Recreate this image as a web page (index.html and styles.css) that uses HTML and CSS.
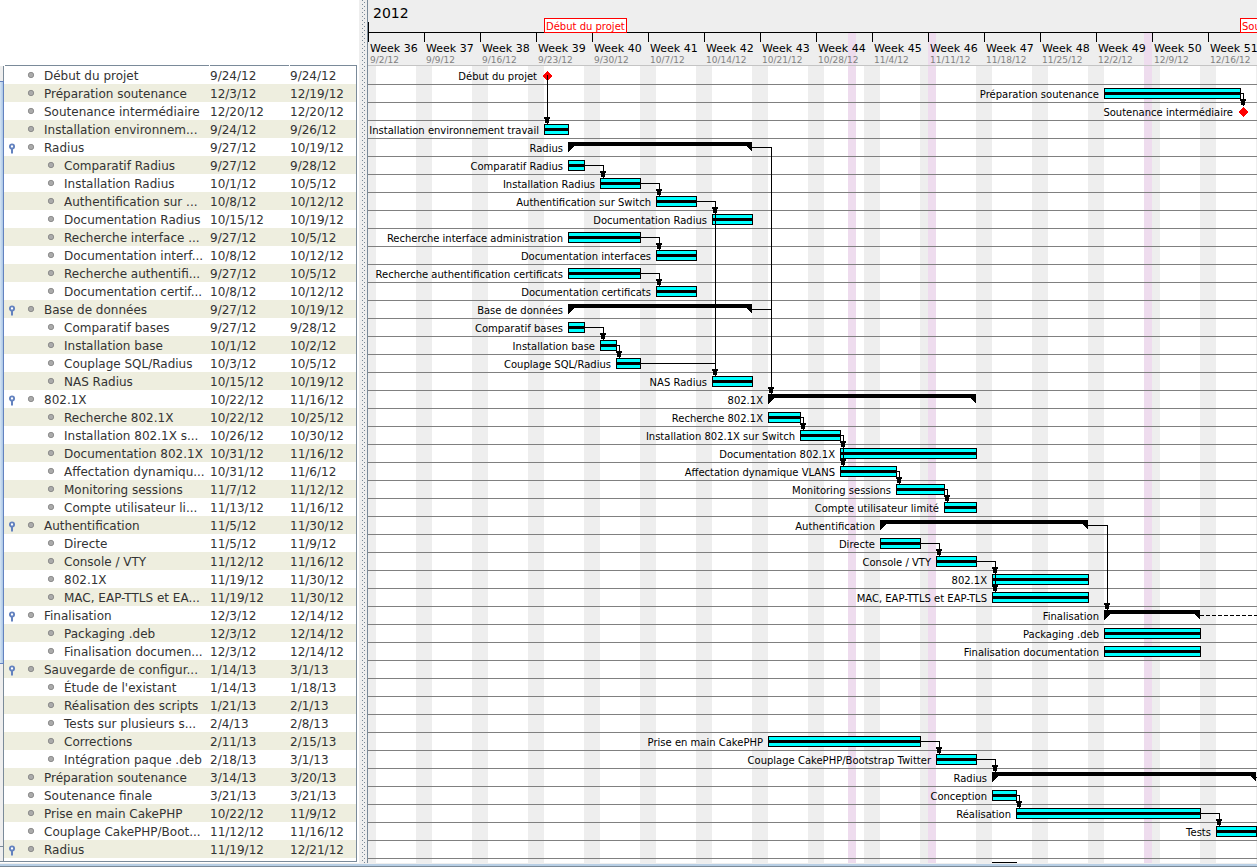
FILE: index.html
```html
<!DOCTYPE html>
<html lang="fr">
<head>
<meta charset="utf-8">
<title>Diagramme de Gantt</title>
<link rel="stylesheet" href="styles.css">
</head>
<body>
<main class="app">
  <div class="workspace">
    <div class="scroll-strip" aria-hidden="true">
      <span class="strip-top"></span>
      <span class="strip-thumb"></span>
      <span class="strip-track"></span>
      <span class="strip-button"></span>
    </div>
    <section class="tasks" aria-label="Tâches">
      <div class="tasks-head"><span></span><span></span><span></span></div>
      <table class="task-table">
        <colgroup><col class="col-name"><col class="col-start"><col class="col-end"></colgroup>
        <tbody id="task-rows"></tbody>
      </table>
    </section>
    <div class="splitter" role="separator" aria-orientation="vertical"></div>
    <section class="gantt" aria-label="Planning">
      <header class="timeline">
        <div class="holidays" aria-hidden="true"><span></span><span></span><span></span></div>
        <div class="year-row">2012
          <span class="flag flag-start">Début du projet</span>
          <span class="flag flag-mid">Soutenance intermédiaire</span>
        </div>
        <ol class="weeks" id="weeks"></ol>
      </header>
      <div class="chart">
        <div class="holidays" aria-hidden="true"><span></span><span></span><span></span></div>
        <svg id="chart" class="chart-canvas" width="1200" height="810" role="img" aria-label="Diagramme de Gantt"></svg>
      </div>
    </section>
  </div>
  <footer class="bottom-edge"></footer>
</main>
<script src="gantt.js"></script>
</body>
</html>
```

FILE: styles.css
```css
* { box-sizing: border-box; }

body {
  margin: 0;
  background: #fff;
  color: #333;
  font-family: "DejaVu Sans", Verdana, sans-serif;
  font-size: 12px;
}

.app {
  display: flex;
  flex-direction: column;
  height: 100vh;
  overflow: hidden;
}

.workspace {
  flex: 1;
  min-height: 0;
  display: grid;
  grid-template-columns: 4px 353px 11px minmax(0, 1fr);
}

/* Left scroll strip */
.scroll-strip {
  display: flex;
  flex-direction: column;
  padding: 66px 0 1px;
}
.scroll-strip span { border-right: 1px solid #7a8a99; background: #eee; }
.scroll-strip .strip-top { height: 15px; }
.scroll-strip .strip-thumb {
  flex: 582;
  background: linear-gradient(90deg, #d6e4f3, #a9c6e6);
  border: solid #6382bf;
  border-width: 1px 1px 1px 0;
}
.scroll-strip .strip-track { flex: 182; }
.scroll-strip .strip-button { height: 16px; border-top: 1px solid #7a8a99; border-bottom: 1px solid #7a8a99; }

/* Task list */
.tasks {
  display: flex;
  flex-direction: column;
  min-height: 0;
  padding-bottom: 1px;
}
.tasks-head {
  display: grid;
  grid-template-columns: 204px 79px 1fr;
  gap: 1px;
  height: 66px;
  padding-left: 1px;
}
.tasks-head span { border-bottom: 1px solid #7a8a99; }
.task-table {
  width: 100%;
  flex: 1;
  border-collapse: collapse;
  table-layout: fixed;
  display: block;
  overflow: hidden;
  border-right: 1px solid #7a8a99;
  border-bottom: 1px solid #7a8a99;
}
.col-name { width: 204px; }
.col-start { width: 80px; }
.col-end { width: 68px; }
.task-row:nth-child(even) { background: #eeeedf; }
.task-row td {
  height: 18px;
  padding: 2px 0 0 2px;
  line-height: 16px;
  white-space: nowrap;
}
.task-row .name-cell { padding: 0; }
.name {
  display: grid;
  grid-template-columns: 16px 22px 1fr;
  align-items: center;
  column-gap: 1px;
}
.name.child { grid-template-columns: 36px 22px 1fr; }
.name-text { padding-top: 2px; }
.toggle {
  width: 16px;
  height: 18px;
  padding: 0;
  border: 0;
  background: none;
  display: block;
}
.toggle svg, .bullet { display: block; }
.bullet { margin-left: 6px; }

/* Splitter */
.splitter {
  border-right: 1px solid #7a8a99;
  background:
    linear-gradient(90deg, #fff 2px, transparent 2px),
    conic-gradient(from 0deg at 1px 1px, transparent 75%, #7a8a99 0) 5px 0 / 6px 4px,
    conic-gradient(from 0deg at 1px 1px, transparent 75%, #7a8a99 0) 7px 2px / 6px 4px,
    #eee;
}

/* Timeline header */
.gantt {
  display: flex;
  flex-direction: column;
  min-width: 0;
  min-height: 0;
  overflow: hidden;
  color: #000;
}
.timeline {
  position: relative;
  height: 66px;
  background: #eee;
  border-bottom: 1px solid #c4c4c4;
}
.timeline .holidays { top: 33px; }
.year-row {
  position: relative;
  height: 33px;
  padding: 5px;
  border-bottom: 1px solid #000;
  background: linear-gradient(#000, #000) 0 100% / 1px 10px no-repeat;
  font-size: 14px;
  line-height: 16px;
}
.flag {
  position: absolute;
  top: 18px;
  height: 15px;
  padding: 0 1px;
  border: 1px solid #f00;
  background: #fff;
  color: #f00;
  font-size: 10px;
  line-height: 15px;
  white-space: nowrap;
}
.flag-start { left: 176px; }
.flag-mid { left: 872px; }
.weeks {
  position: relative;
  display: flex;
  margin: 0;
  padding: 0;
  list-style: none;
}
.week {
  flex: 0 0 56px;
  height: 32px;
  padding: 8px 0 0 2px;
  white-space: nowrap;
  font-size: 11px;
  line-height: 15px;
  background: linear-gradient(#000, #000) 0 0 / 1px 9px no-repeat;
}
.week time {
  display: block;
  color: #808080;
  font-size: 9px;
  line-height: 9px;
}

/* Chart: 8px per day, 18px per row, weeks start on Sunday */
.chart {
  position: relative;
  flex: 1;
  min-height: 0;
  overflow: hidden;
  background: repeating-linear-gradient(90deg, #eee 0 8px, #fff 8px 48px, #eee 48px 56px);
}
.holidays { position: absolute; inset: 0; overflow: hidden; }
.holidays span { position: absolute; top: 0; bottom: 0; width: 8px; background: #eedcee; }
.holidays span:nth-child(1) { left: 480px; }
.holidays span:nth-child(2) { left: 560px; }
.holidays span:nth-child(3) { left: 776px; }
.chart-canvas { position: relative; display: block; shape-rendering: crispEdges; }
.row-line { stroke: #808080; }
.bar { fill: #0ff; stroke: #000; }
.progress, .summary, .arrow { fill: #000; }
.milestone { fill: #f00; }
.link { fill: none; stroke: #000; }
.link.dashed { stroke-dasharray: 4 2; }
.bar-label { font-size: 10px; text-anchor: end; fill: #000; }

.bottom-edge {
  height: 4px;
  border-top: 1px solid #eee;
  border-bottom: 1px solid #7a8a99;
  background: #b8cfe5;
}
```

FILE: gantt.js
```javascript
const DAY = 8;
const ROW = 18;

// [level, name, start, end, is group]
const tasks = [
  [1, "Début du projet", "9/24/12", "9/24/12"],
  [1, "Préparation soutenance", "12/3/12", "12/19/12"],
  [1, "Soutenance intermédiaire", "12/20/12", "12/20/12"],
  [1, "Installation environnem...", "9/24/12", "9/26/12"],
  [1, "Radius", "9/27/12", "10/19/12", true],
  [2, "Comparatif Radius", "9/27/12", "9/28/12"],
  [2, "Installation Radius", "10/1/12", "10/5/12"],
  [2, "Authentification sur ...", "10/8/12", "10/12/12"],
  [2, "Documentation Radius", "10/15/12", "10/19/12"],
  [2, "Recherche interface ...", "9/27/12", "10/5/12"],
  [2, "Documentation interf...", "10/8/12", "10/12/12"],
  [2, "Recherche authentifi...", "9/27/12", "10/5/12"],
  [2, "Documentation certif...", "10/8/12", "10/12/12"],
  [1, "Base de données", "9/27/12", "10/19/12", true],
  [2, "Comparatif bases", "9/27/12", "9/28/12"],
  [2, "Installation base", "10/1/12", "10/2/12"],
  [2, "Couplage SQL/Radius", "10/3/12", "10/5/12"],
  [2, "NAS Radius", "10/15/12", "10/19/12"],
  [1, "802.1X", "10/22/12", "11/16/12", true],
  [2, "Recherche 802.1X", "10/22/12", "10/25/12"],
  [2, "Installation 802.1X s...", "10/26/12", "10/30/12"],
  [2, "Documentation 802.1X", "10/31/12", "11/16/12"],
  [2, "Affectation dynamiqu...", "10/31/12", "11/6/12"],
  [2, "Monitoring sessions", "11/7/12", "11/12/12"],
  [2, "Compte utilisateur li...", "11/13/12", "11/16/12"],
  [1, "Authentification", "11/5/12", "11/30/12", true],
  [2, "Directe", "11/5/12", "11/9/12"],
  [2, "Console / VTY", "11/12/12", "11/16/12"],
  [2, "802.1X", "11/19/12", "11/30/12"],
  [2, "MAC, EAP-TTLS et EA...", "11/19/12", "11/30/12"],
  [1, "Finalisation", "12/3/12", "12/14/12", true],
  [2, "Packaging .deb", "12/3/12", "12/14/12"],
  [2, "Finalisation documen...", "12/3/12", "12/14/12"],
  [1, "Sauvegarde de configur...", "1/14/13", "3/1/13", true],
  [2, "Étude de l'existant", "1/14/13", "1/18/13"],
  [2, "Réalisation des scripts", "1/21/13", "2/1/13"],
  [2, "Tests sur plusieurs s...", "2/4/13", "2/8/13"],
  [2, "Corrections", "2/11/13", "2/15/13"],
  [2, "Intégration paque .deb", "2/18/13", "3/1/13"],
  [1, "Préparation soutenance", "3/14/13", "3/20/13"],
  [1, "Soutenance finale", "3/21/13", "3/21/13"],
  [1, "Prise en main CakePHP", "10/22/12", "11/9/12"],
  [1, "Couplage CakePHP/Boot...", "11/12/12", "11/16/12"],
  [1, "Radius", "11/19/12", "12/21/12", true]
];

// row: [label, start, end, type]
const bars = {
  0: ["Début du projet", "9/24/12", "9/24/12", "milestone"],
  1: ["Préparation soutenance", "12/3/12", "12/19/12"],
  2: ["Soutenance intermédiaire", "12/20/12", "12/20/12", "milestone"],
  3: ["Installation environnement travail", "9/24/12", "9/26/12"],
  4: ["Radius", "9/27/12", "10/19/12", "summary"],
  5: ["Comparatif Radius", "9/27/12", "9/28/12"],
  6: ["Installation Radius", "10/1/12", "10/5/12"],
  7: ["Authentification sur Switch", "10/8/12", "10/12/12"],
  8: ["Documentation Radius", "10/15/12", "10/19/12"],
  9: ["Recherche interface administration", "9/27/12", "10/5/12"],
  10: ["Documentation interfaces", "10/8/12", "10/12/12"],
  11: ["Recherche authentification certificats", "9/27/12", "10/5/12"],
  12: ["Documentation certificats", "10/8/12", "10/12/12"],
  13: ["Base de données", "9/27/12", "10/19/12", "summary"],
  14: ["Comparatif bases", "9/27/12", "9/28/12"],
  15: ["Installation base", "10/1/12", "10/2/12"],
  16: ["Couplage SQL/Radius", "10/3/12", "10/5/12"],
  17: ["NAS Radius", "10/15/12", "10/19/12"],
  18: ["802.1X", "10/22/12", "11/16/12", "summary"],
  19: ["Recherche 802.1X", "10/22/12", "10/25/12"],
  20: ["Installation 802.1X sur Switch", "10/26/12", "10/30/12"],
  21: ["Documentation 802.1X", "10/31/12", "11/16/12"],
  22: ["Affectation dynamique VLANS", "10/31/12", "11/6/12"],
  23: ["Monitoring sessions", "11/7/12", "11/12/12"],
  24: ["Compte utilisateur limité", "11/13/12", "11/16/12"],
  25: ["Authentification", "11/5/12", "11/30/12", "summary"],
  26: ["Directe", "11/5/12", "11/9/12"],
  27: ["Console / VTY", "11/12/12", "11/16/12"],
  28: ["802.1X", "11/19/12", "11/30/12"],
  29: ["MAC, EAP-TTLS et EAP-TLS", "11/19/12", "11/30/12"],
  30: ["Finalisation", "12/3/12", "12/14/12", "summary"],
  31: ["Packaging .deb", "12/3/12", "12/14/12"],
  32: ["Finalisation documentation", "12/3/12", "12/14/12"],
  37: ["Prise en main CakePHP", "10/22/12", "11/9/12"],
  38: ["Couplage CakePHP/Bootstrap Twitter", "11/12/12", "11/16/12"],
  39: ["Radius", "11/19/12", "12/21/12", "summary"],
  40: ["Conception", "11/19/12", "11/21/12"],
  41: ["Réalisation", "11/22/12", "12/14/12"],
  42: ["Tests", "12/17/12", "12/21/12"],
  44: ["", "11/19/12", "11/21/12"]
};

const links = [
  [0, 3], [1, 2], [4, 18], [13, 18], [5, 6], [6, 7], [7, 8], [7, 17], [9, 10],
  [11, 12], [14, 15], [15, 16], [16, 17], [19, 20], [20, 21], [20, 22], [22, 23],
  [23, 24], [25, 30], [26, 27], [27, 28], [27, 29], [37, 38], [38, 39], [40, 41], [41, 42]
];

const utc = (text) => {
  const [m, d, y] = text.split("/").map(Number);
  return Date.UTC(2000 + y, m - 1, d);
};
const dayIndex = (text) => Math.round((utc(text) - utc("9/2/12")) / 86400000);

const handle = (name) => `<button class="toggle" type="button" aria-label="Réduire ${name}">
  <svg width="16" height="18" viewBox="0 0 16 18"><circle cx="8" cy="8.5" r="2.1" fill="#fff" stroke="#6382bf" stroke-width="1.9"/><path d="M8 11v4.5" stroke="#6382bf" stroke-width="2"/></svg></button>`;
const bullet = `<svg class="bullet" width="8" height="18" viewBox="0 0 8 18"><circle cx="4" cy="9" r="2.7" fill="#aaa" stroke="#808080" stroke-width=".8"/></svg>`;

document.getElementById("task-rows").innerHTML = tasks.map(([level, name, start, end, group]) => `
  <tr class="task-row">
    <td class="name-cell"><div class="name${level === 2 ? " child" : ""}">${group ? handle(name) : "<span></span>"}${bullet}<span class="name-text">${name}</span></div></td>
    <td>${start}</td><td>${end}</td>
  </tr>`).join("");

document.getElementById("weeks").innerHTML = Array.from({ length: 16 }, (_, i) => {
  const d = new Date(utc("9/2/12") + i * 7 * 86400000);
  const label = `${d.getUTCMonth() + 1}/${d.getUTCDate()}/12`;
  return `<li class="week">Week ${36 + i}<time>${label}</time></li>`;
}).join("");

const geometry = (row) => {
  const [label, start, end, type] = bars[row];
  const x = dayIndex(start) * DAY;
  return { label, type, x, right: (dayIndex(end) + 1) * DAY, top: row * ROW };
};

const drawBar = (row) => {
  const { label, type, x, right, top } = geometry(row);
  const width = right - x;
  const text = `<text class="bar-label" x="${x - (type === "milestone" ? 7 : 5)}" y="${top + 14}">${label}</text>`;
  if (type === "milestone") {
    return `${text}<path class="milestone" d="M${x + 3} ${top + 5}l5 5l-5 5l-5 -5z"/>`;
  }
  if (type === "summary") {
    return `${text}<path class="summary" d="M${x} ${top + 4}H${right}v10l-6 -6H${x + 6}l-6 6z"/>`;
  }
  return `${text}<rect class="bar" x="${x + 0.5}" y="${top + 4.5}" width="${width}" height="10"/>
    <rect class="progress" x="${x + 1}" y="${top + 8}" width="${width - 1}" height="3"/>`;
};

const drawLink = ([from, to]) => {
  const a = geometry(from);
  const b = geometry(to);
  const x = b.x + 3;
  const y = b.top + 4;
  const startX = a.type === "milestone" ? x : a.right;
  return `<path class="link" d="M${startX} ${a.top + 9.5}H${x + 0.5}V${y}"/>
    <path class="arrow" d="M${x - 3} ${y - 7}h6v1l-1 2v3h-4v-3l-1 -2z"/>`;
};

const lines = Array.from({ length: 44 }, (_, i) =>
  `<path class="row-line" d="M0 ${(i + 1) * ROW + 0.5}H1200"/>`).join("");

document.getElementById("chart").innerHTML = lines
  + Object.keys(bars).map(Number).map(drawBar).join("")
  + links.map(drawLink).join("")
  + `<path class="link dashed" d="M832 ${30 * ROW + 9.5}H1200"/>`
  + `<path class="link" d="M888 ${39 * ROW + 9.5}H1200"/>`;
```
